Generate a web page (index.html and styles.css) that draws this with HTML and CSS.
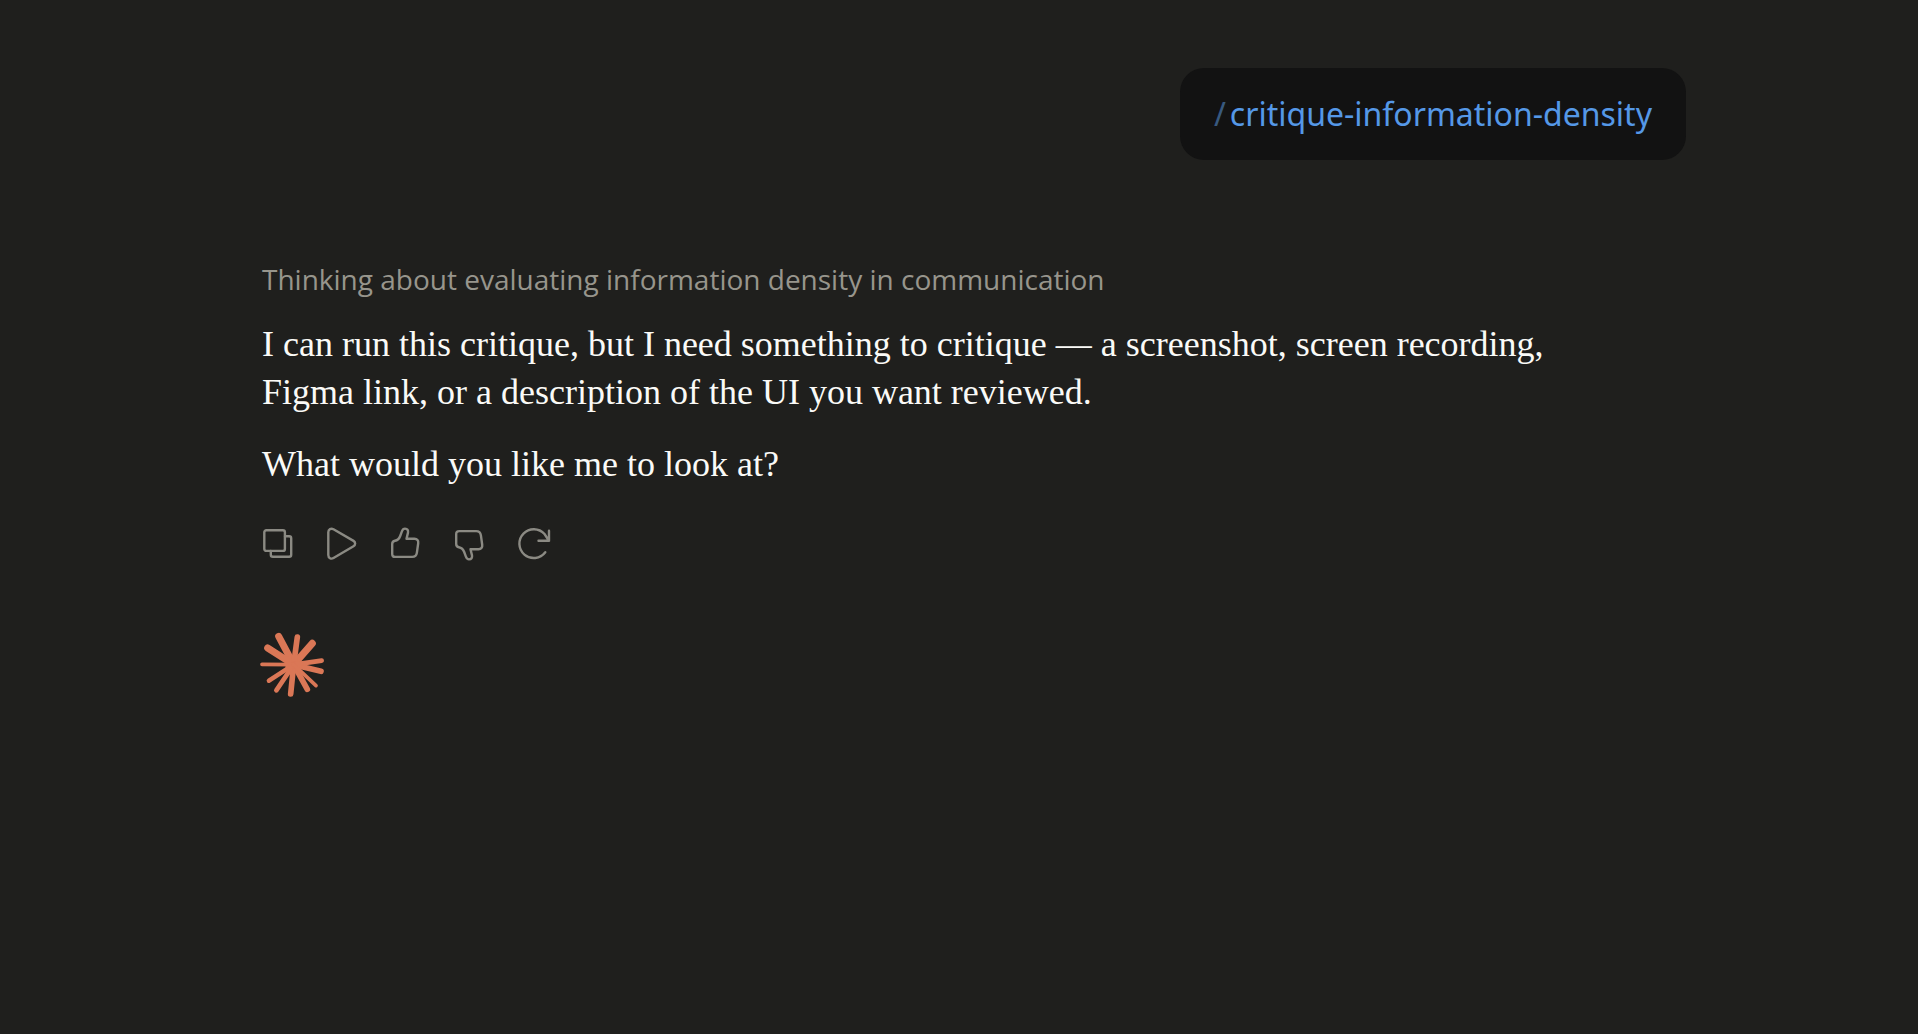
FILE: index.html
```html
<!DOCTYPE html>
<html lang="en">
<head>
    <meta charset="utf-8">
    <title>Chat</title>
    <link rel="stylesheet" href="styles.css">
</head>
<body>
    <main class="chat">
        <div class="message-user">
            <span class="slash">/</span><span class="command">critique-information-density</span>
        </div>

        <div class="message-reply">
            <p class="thinking">Thinking about evaluating information density in communication</p>
            <p>I can run this critique, but I need something to critique — a screenshot, screen recording, Figma link, or a description of the UI you want reviewed.</p>
            <p>What would you like me to look at?</p>

            <div class="actions">
                <button type="button" aria-label="Copy">
                    <svg viewBox="0 0 32 32">
                        <rect x="2.3" y="2.3" width="20.6" height="20.6" rx="2"/>
                        <path d="M23 8.300h4.200a2 2 0 0 1 2 2v16.400a2 2 0 0 1-2 2H10.800a2 2 0 0 1-2-2v-3.800"/>
                    </svg>
                </button>
                <button type="button" aria-label="Read aloud">
                    <svg viewBox="0 0 32 32">
                        <path d="M2.300 4.200C2.300 1.200 5 0 7.500 1.300L27.500 12.900c2.200 1.300 2.200 4.100 0 5.400L7.500 30c-2.400 1.400-5.200.1-5.200-2.900z"/>
                    </svg>
                </button>
                <button type="button" aria-label="Good response">
                    <svg viewBox="0 0 32 32">
                        <path d="M2.200 16c0-2 .9-2.900 2.700-3.200 2.700-.5 4.400-2.300 5.300-4.800l1.700-4.700C12.600 1.400 13.600.6 15 .6c2.400 0 3.400 1.800 3 4l-1.500 6.200h8c2.600 0 4.100 1.900 3.700 4.400l-1.300 9.400c-.4 2.800-2 4.300-4.700 4.300H5.200c-2 0-3-1-3-3z"/>
                    </svg>
                </button>
                <button type="button" aria-label="Bad response">
                    <svg viewBox="0 0 32 32">
                        <path transform="matrix(1 0 0 -1 0 32)" d="M2.200 16c0-2 .9-2.900 2.700-3.200 2.700-.5 4.400-2.300 5.300-4.800l1.700-4.700C12.600 1.400 13.600.6 15 .6c2.400 0 3.400 1.800 3 4l-1.500 6.200h8c2.600 0 4.100 1.900 3.700 4.400l-1.300 9.400c-.4 2.800-2 4.300-4.700 4.300H5.200c-2 0-3-1-3-3z"/>
                    </svg>
                </button>
                <button type="button" aria-label="Retry">
                    <svg viewBox="0 0 32 32">
                        <path d="M27.300 24.300A14.400 14.400 0 1 1 26.500 6L31 12.800M31 2.800v10H20.500"/>
                    </svg>
                </button>
            </div>

            <svg class="spark" viewBox="30 42 192 192" role="img" aria-label="Claude">
                <circle cx="131" cy="137" r="25"/>
                <g stroke-width="21">
                    <path d="M131 137 86 52"/>
                    <path d="M131 137 187 73"/>
                    <path d="M131 137 53 87"/>
                </g>
                <g stroke-width="17">
                    <path d="M131 137 142 54"/>
                    <path d="M131 137 213 157"/>
                    <path d="M131 137 172 211"/>
                    <path d="M131 137 122 225"/>
                </g>
                <g stroke-width="14">
                    <path d="M131 137 215 125"/>
                    <path d="M131 137 79 214"/>
                    <path d="M131 137 57 185"/>
                </g>
                <g stroke-width="11">
                    <path d="M131 137 36 136"/>
                    <path d="M131 137 198 200"/>
                </g>
            </svg>
        </div>
    </main>
</body>
</html>
```

FILE: styles.css
```css
body {
    margin: 0;
    background-color: #1f1f1d;
    color: #fafaf7;
    font-family: "Liberation Serif", serif;
    font-size: 36px;
    line-height: 48px;
}
.chat {
    display: flex;
    flex-direction: column;
    max-width: 1454px;
    margin: 0 auto;
    padding: 68px 32px;
}
.message-user {
    align-self: flex-end;
    padding: 22px 34px;
    border-radius: 24px;
    background-color: #121212;
    color: #5598e7;
    font-family: "Noto Sans", sans-serif;
    font-size: 32px;
}
.slash {
    margin-right: 4px;
    color: #38597f;
}
.message-reply {
    margin-top: 95px;
    padding: 0 30px;
}
p {
    max-width: 1336px;
    margin: 0 0 24px;
}
.thinking {
    margin-bottom: 17px;
    color: #97958c;
    font-family: "Open Sans", sans-serif;
    font-size: 28px;
}
.actions {
    display: flex;
    gap: 32px;
    margin-top: 40px;
}
.actions button {
    width: 32px;
    height: 32px;
    padding: 0;
    border: none;
    background: none;
    cursor: pointer;
}
.actions svg {
    display: block;
    overflow: visible;
    fill: none;
    stroke: #8b8a83;
    stroke-width: 2.4;
    stroke-linecap: round;
    stroke-linejoin: round;
}
.spark {
    display: block;
    width: 64px;
    height: 64px;
    margin: 73px 0 0 -2px;
    overflow: visible;
    fill: #da7756;
    stroke: #da7756;
    stroke-linecap: round;
}
```
